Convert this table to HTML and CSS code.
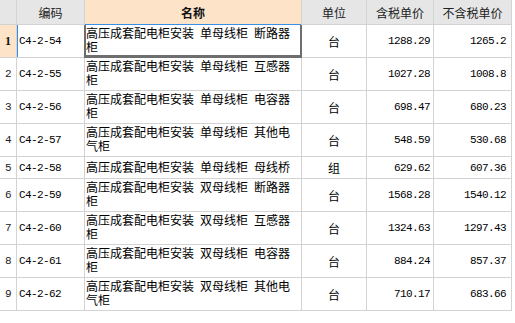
FILE: index.html
```html
<!DOCTYPE html>
<html lang="zh-CN">
<head>
<meta charset="utf-8">
<title>定额表</title>
<link rel="stylesheet" href="styles.css">
</head>
<body>
<div class="grid">
  <div class="h rn"></div>
  <div class="h">编码</div>
  <div class="h hsel">名称</div>
  <div class="h">单位</div>
  <div class="h">含税单价</div>
  <div class="h">不含税单价</div>

  <div class="r1 rn rsel">1</div>
  <div class="r1 code csel">C4-2-54</div>
  <div class="r1 name focus">高压成套配电柜安装 单母线柜 断路器柜</div>
  <div class="r1 unit">台</div>
  <div class="r1 num">1288.29</div>
  <div class="r1 num last">1265.2</div>

  <div class="r2 rn">2</div>
  <div class="r2 code">C4-2-55</div>
  <div class="r2 name">高压成套配电柜安装 单母线柜 互感器柜</div>
  <div class="r2 unit">台</div>
  <div class="r2 num">1027.28</div>
  <div class="r2 num last">1008.8</div>

  <div class="r2 rn">3</div>
  <div class="r2 code">C4-2-56</div>
  <div class="r2 name">高压成套配电柜安装 单母线柜 电容器柜</div>
  <div class="r2 unit">台</div>
  <div class="r2 num">698.47</div>
  <div class="r2 num last">680.23</div>

  <div class="r2 rn">4</div>
  <div class="r2 code">C4-2-57</div>
  <div class="r2 name">高压成套配电柜安装 单母线柜 其他电气柜</div>
  <div class="r2 unit">台</div>
  <div class="r2 num">548.59</div>
  <div class="r2 num last">530.68</div>

  <div class="r2 rn">5</div>
  <div class="r2 code">C4-2-58</div>
  <div class="r2 name single">高压成套配电柜安装 单母线柜 母线桥</div>
  <div class="r2 unit">组</div>
  <div class="r2 num">629.62</div>
  <div class="r2 num last">607.36</div>

  <div class="r2 rn">6</div>
  <div class="r2 code">C4-2-59</div>
  <div class="r2 name">高压成套配电柜安装 双母线柜 断路器柜</div>
  <div class="r2 unit">台</div>
  <div class="r2 num">1568.28</div>
  <div class="r2 num last">1540.12</div>

  <div class="r2 rn">7</div>
  <div class="r2 code">C4-2-60</div>
  <div class="r2 name">高压成套配电柜安装 双母线柜 互感器柜</div>
  <div class="r2 unit">台</div>
  <div class="r2 num">1324.63</div>
  <div class="r2 num last">1297.43</div>

  <div class="r2 rn">8</div>
  <div class="r2 code">C4-2-61</div>
  <div class="r2 name">高压成套配电柜安装 双母线柜 电容器柜</div>
  <div class="r2 unit">台</div>
  <div class="r2 num">884.24</div>
  <div class="r2 num last">857.37</div>

  <div class="r2 rn">9</div>
  <div class="r2 code">C4-2-62</div>
  <div class="r2 name">高压成套配电柜安装 双母线柜 其他电气柜</div>
  <div class="r2 unit">台</div>
  <div class="r2 num">710.17</div>
  <div class="r2 num last">683.66</div>
</div>
</body>
</html>
```
FILE: styles.css
```css
html, body {
  margin: 0;
  padding: 0;
  background: #ffffff;
}

body {
  font-family: "Noto Sans CJK SC", "Noto Sans", sans-serif;
  font-size: 12px;
  color: #000;
}

.grid {
  display: grid;
  width: 511px;
  grid-template-columns: 16px 67px 216px 64px 66px 77px;
  grid-template-rows: 24px 32px 32px 32px 32px 21px 32px 32px 32px 32px;
  gap: 1px;
  padding: 0 1px 1px 0;
  background: #d3d3d3;
}

.grid > div {
  background: #ffffff;
  min-width: 0;
  overflow: hidden;
  position: relative;
}

.h {
  background: #e6e6e6 !important;
  display: flex;
  align-items: center;
  justify-content: center;
  font-size: 12px;
  color: #222;
  line-height: 14px;
  padding-top: 1px;
}

.hsel {
  background: #fde4c9 !important;
  font-weight: bold;
  color: #111;
}

.rn {
  display: flex;
  align-items: center;
  justify-content: center;
  font-family: "Liberation Mono", monospace;
  font-size: 11px;
  letter-spacing: -0.6px;
  color: #222;
}

.rsel {
  background: #fde4c9 !important;
  font-family: "Liberation Serif", serif;
  font-weight: bold;
  font-size: 12px;
  letter-spacing: 0;
  color: #111;
}

.code {
  display: flex;
  align-items: center;
  padding-left: 2px;
  font-family: "Liberation Mono", monospace;
  font-size: 11px;
  letter-spacing: -0.6px;
}

.csel {
  box-shadow: inset 1px 0 0 #3b8ee6;
}

.name {
  padding: 1px 0 0 1px;
  line-height: 14px;
  word-spacing: 3.3px;
}

.name.single {
  padding-top: 3px;
}

.focus {
  box-shadow: 0 -1px 0 #3b8ee6;
  overflow: visible !important;
}

.focus::after {
  content: "";
  position: absolute;
  left: -1px;
  right: -1px;
  top: 0;
  bottom: -1px;
  border-left: 2px solid #6e6e6e;
  border-right: 2px solid #6e6e6e;
  border-bottom: 3px solid #6e6e6e;
}

.unit {
  display: flex;
  align-items: center;
  justify-content: center;
}

.num {
  display: flex;
  align-items: center;
  justify-content: flex-end;
  padding-right: 3px;
  font-family: "Liberation Mono", monospace;
  font-size: 11px;
  letter-spacing: -0.6px;
}

.num.last {
  padding-right: 5px;
}
```
